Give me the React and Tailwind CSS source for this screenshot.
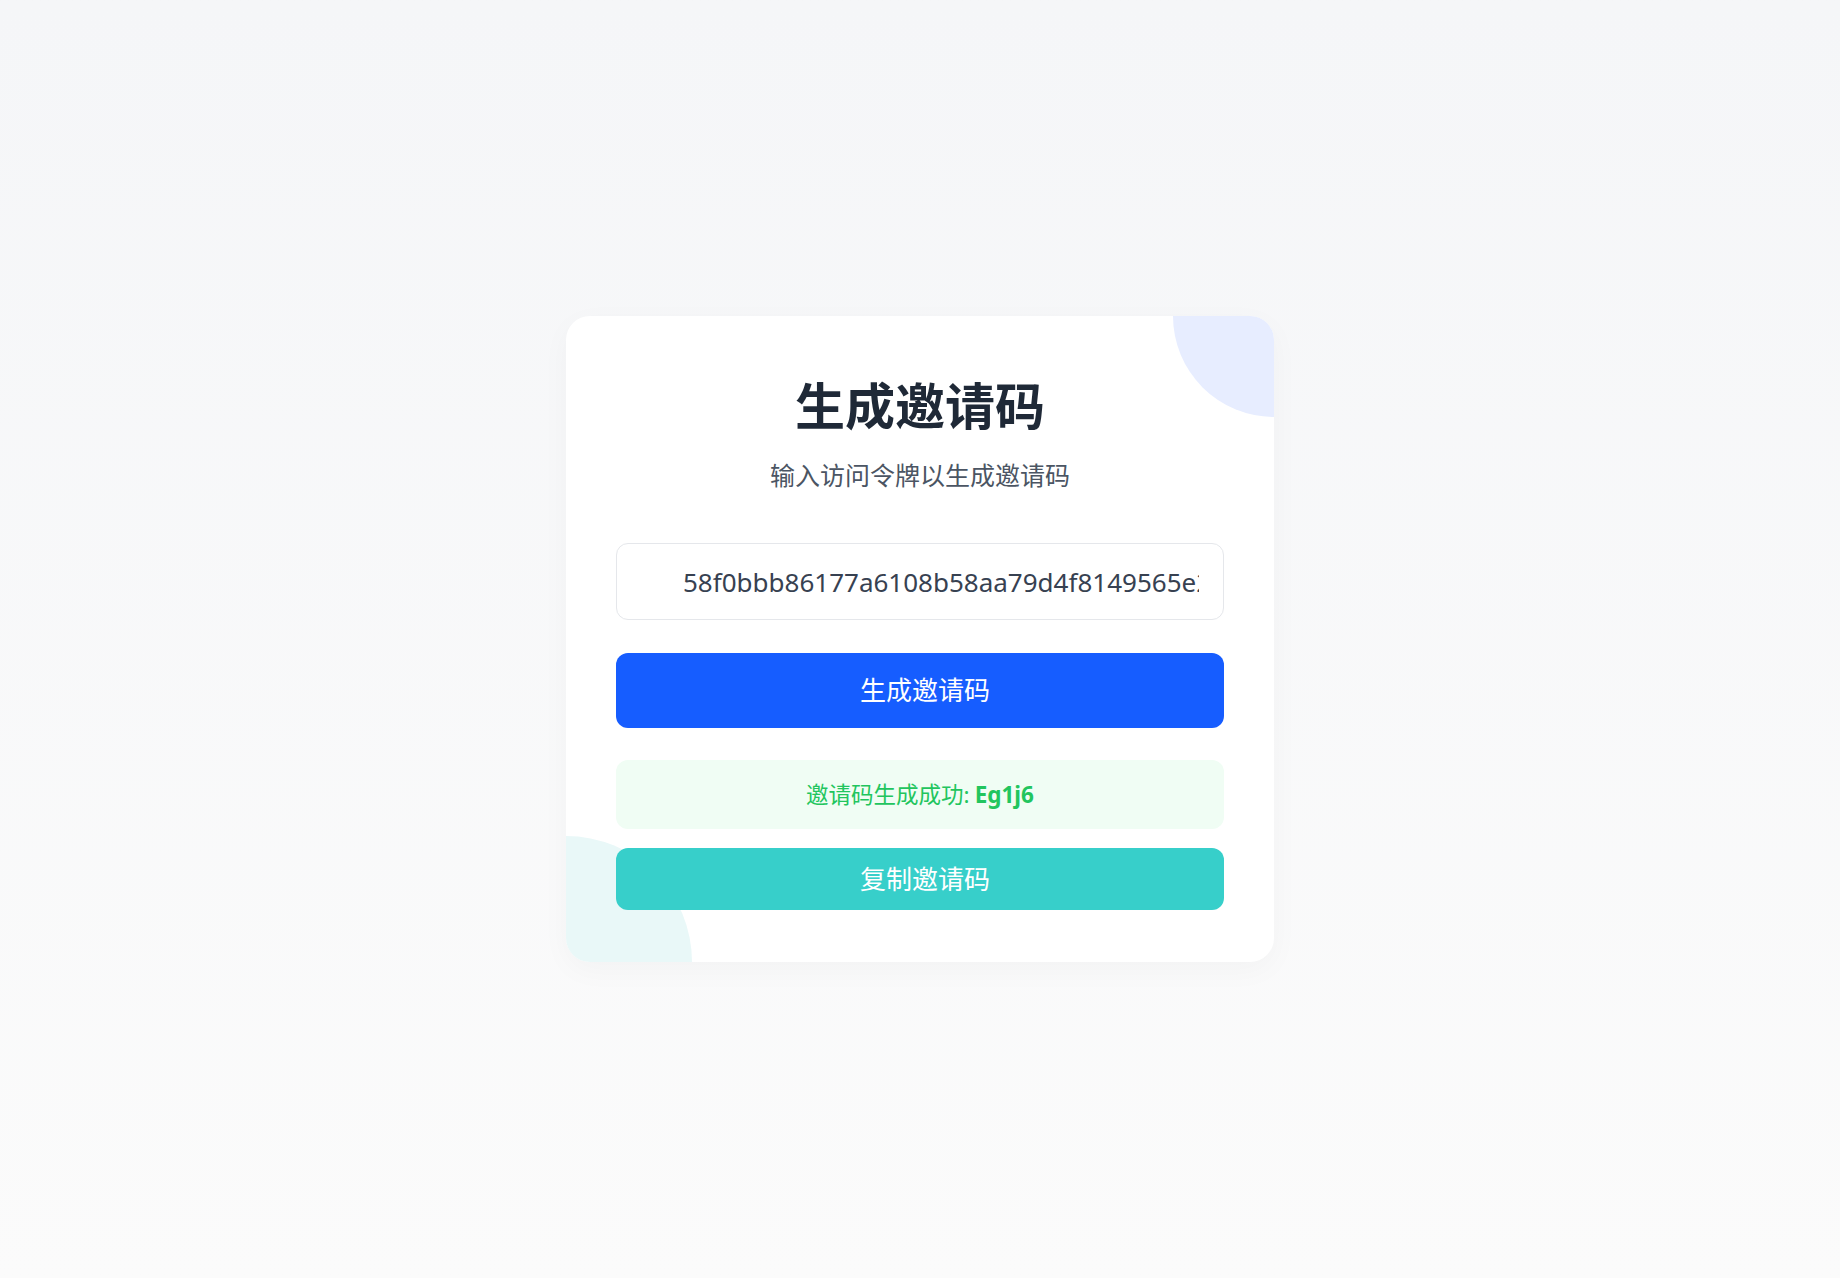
import React, { useState } from "react";

const font = "font-['Noto_Sans','Noto_Sans_CJK_SC',sans-serif]";

const InviteCode = () => {
  const [token, setToken] = useState("58f0bbb86177a6108b58aa79d4f8149565e2a0c1d7f3");
  const [code] = useState("Eg1j6");

  return (
    <div className={`min-h-screen w-full flex items-center justify-center bg-gradient-to-b from-[#f5f6f8] to-[#fbfbfb] ${font}`}>
      <div className="relative w-[708px] overflow-hidden rounded-3xl bg-white px-[50px] pt-[60px] pb-[52px] shadow-[0_8px_30px_rgba(0,0,0,0.03)]">
        {/* corner decorations */}
        <div className="absolute -top-[101px] -right-[101px] h-[202px] w-[202px] rounded-full bg-[#e7edff]" />
        <div className="absolute -bottom-[126px] -left-[126px] h-[252px] w-[252px] rounded-full bg-[#e9f8f8]" />

        <div className="relative flex flex-col">
          <h1 className="text-center text-[50px] leading-[60px] font-bold text-[#1f2937]">生成邀请码</h1>
          <p className="mt-[19px] text-center text-[25px] leading-[40px] text-[#4b5563]">输入访问令牌以生成邀请码</p>

          <input
            type="text"
            value={token}
            onChange={(e) => setToken(e.target.value)}
            className="mt-[48px] h-[77px] w-full rounded-xl border border-[#e5e7eb] bg-white pl-[66px] pr-[24px] text-[26px] text-[#374151] outline-none"
          />

          <button className="mt-[33px] h-[75px] w-full rounded-xl bg-[#165dff] pl-[10px] text-[26px] text-white">
            生成邀请码
          </button>

          <div className="mt-[32px] flex h-[69px] items-center justify-center rounded-xl bg-[#f0fdf4] text-[22.5px] text-[#22c55e]">
            邀请码生成成功: <span className="ml-[5px] font-bold">{code}</span>
          </div>

          <button className="mt-[19px] h-[62px] w-full rounded-xl bg-[#37cfca] pl-[10px] text-[26px] text-white">
            复制邀请码
          </button>
        </div>
      </div>
    </div>
  );
};

export default InviteCode;
